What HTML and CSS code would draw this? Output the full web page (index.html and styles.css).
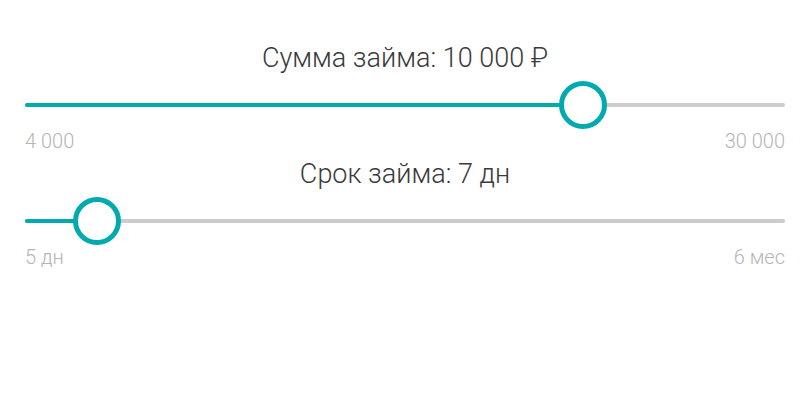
FILE: index.html
```html
<!DOCTYPE html>
<html lang="ru">
<head>
<meta charset="utf-8">
<title>Калькулятор займа</title>
<link rel="stylesheet" href="styles.css">
</head>
<body>
<main class="calc">
  <section class="field field-sum">
    <div class="field-title">Сумма займа: 10 000 ₽</div>
    <div class="range">
      <div class="range-bar">
        <div class="range-fill" style="width: 73.4%"></div>
      </div>
      <div class="range-thumb" style="left: 73.4%"></div>
    </div>
    <div class="range-limits">
      <span>4 000</span>
      <span>30 000</span>
    </div>
  </section>
  <section class="field field-term">
    <div class="field-title">Срок займа: 7 дн</div>
    <div class="range">
      <div class="range-bar">
        <div class="range-fill" style="width: 9.5%"></div>
      </div>
      <div class="range-thumb" style="left: 9.5%"></div>
    </div>
    <div class="range-limits">
      <span>5 дн</span>
      <span>6 мес</span>
    </div>
  </section>
</main>
</body>
</html>
```

FILE: styles.css
```css
html, body {
  margin: 0;
  padding: 0;
  background: #ffffff;
}

body {
  font-family: Roboto, "Noto Sans", Arial, sans-serif;
  font-weight: 300;
  color: #333333;
}

.calc {
  padding: 42px 15px 0 25px;
}

.field-title {
  font-size: 27px;
  line-height: 32px;
  text-align: center;
  color: #3a3a3a;
}

.range {
  position: relative;
  height: 48px;
  margin-top: 7px;
  display: flex;
  align-items: center;
}

.range-bar {
  width: 100%;
  height: 4px;
  border-radius: 2px;
  background: #cccccc;
  overflow: hidden;
}

.range-fill {
  height: 100%;
  background: #00aaad;
}

.range-thumb {
  position: absolute;
  top: 50%;
  width: 48px;
  height: 48px;
  box-sizing: border-box;
  border: 5px solid #00aaad;
  border-radius: 50%;
  background: #ffffff;
  transform: translate(-50%, -50%);
}

.range-limits {
  display: flex;
  justify-content: space-between;
  margin-top: 1px;
  font-size: 20px;
  line-height: 23px;
  color: #b5b5b5;
}

.field-term {
  margin-top: 5px;
}
```
